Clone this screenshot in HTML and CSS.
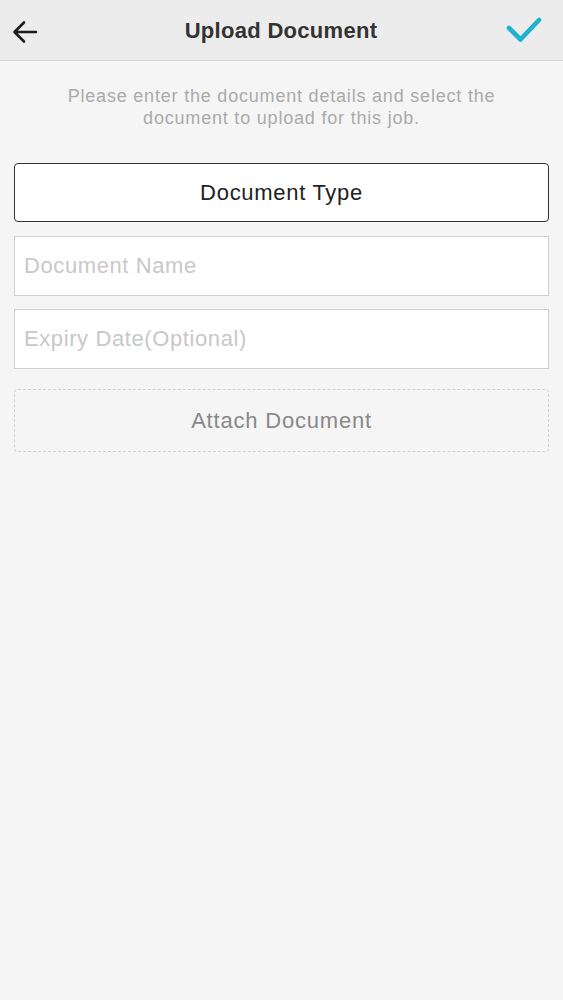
FILE: index.html
```html
<!DOCTYPE html>
<html lang="en">
<head>
    <meta charset="UTF-8">
    <meta name="viewport" content="width=device-width, initial-scale=1.0">
    <title>Upload Document</title>
    <link rel="stylesheet" href="styles.css">
</head>
<body>
    <header class="topbar">
        <button class="icon-btn back" aria-label="Back">
            <svg width="26" height="24" viewBox="0 0 26 24">
                <path d="M24 12H3M12 2.5L2.5 12l9.5 9.5" fill="none" stroke="#1e1e1e" stroke-width="2.6" stroke-linecap="round" stroke-linejoin="round"/>
            </svg>
        </button>
        <h1 class="title">Upload Document</h1>
        <button class="icon-btn done" aria-label="Done">
            <svg width="38" height="28" viewBox="0 0 38 28">
                <path d="M4 13l11.5 11.5L34 5" fill="none" stroke="#1db3cf" stroke-width="4.6" stroke-linecap="round" stroke-linejoin="round"/>
            </svg>
        </button>
    </header>

    <main class="content">
        <p class="intro">Please enter the document details and select the document to upload for this job.</p>

        <div class="doc-type">Document Type</div>

        <input class="field" type="text" placeholder="Document Name">
        <input class="field" type="text" placeholder="Expiry Date(Optional)">

        <div class="attach">Attach Document</div>
    </main>
</body>
</html>
```

FILE: styles.css
```css
* {
    margin: 0;
    padding: 0;
    box-sizing: border-box;
}

body {
    font-family: 'Liberation Sans', Arial, sans-serif;
    background: #f5f5f5;
    color: #222;
    min-height: 100vh;
}

.topbar {
    height: 61px;
    background: #ececec;
    border-bottom: 1px solid #d6d6d6;
    display: flex;
    align-items: center;
    justify-content: space-between;
    padding: 0 20px 0 12px;
}

.icon-btn {
    background: none;
    border: none;
    display: flex;
    align-items: center;
    cursor: pointer;
}

.back {
    margin-top: 4px;
}

.done {
    margin-top: -2px;
}

.title {
    font-size: 22px;
    font-weight: bold;
    letter-spacing: 0.3px;
    color: #333;
    margin-left: 19px;
    margin-top: 1px;
}

.content {
    padding: 24px 14px;
    display: flex;
    flex-direction: column;
}

.intro {
    font-size: 18px;
    line-height: 22px;
    letter-spacing: 0.8px;
    color: #aaa;
    text-align: center;
    padding: 0 36px;
    margin-bottom: 34px;
}

.doc-type {
    height: 59px;
    background: #fff;
    border: 1.5px solid #333;
    border-radius: 4px;
    display: flex;
    align-items: center;
    justify-content: center;
    font-size: 22px;
    letter-spacing: 0.7px;
    color: #222;
    margin-bottom: 14px;
}

.field {
    height: 60px;
    background: #fff;
    border: 1px solid #d0d0d0;
    font-family: inherit;
    font-size: 22px;
    letter-spacing: 0.6px;
    color: #222;
    padding: 0 9px;
    outline: none;
    margin-bottom: 13px;
}

.field::placeholder {
    color: #c8c8c8;
}

.attach {
    height: 63px;
    border: 1px dashed #d0d0d0;
    border-radius: 4px;
    display: flex;
    align-items: center;
    justify-content: center;
    font-size: 22px;
    letter-spacing: 0.8px;
    color: #888;
    margin-top: 7px;
}
```
